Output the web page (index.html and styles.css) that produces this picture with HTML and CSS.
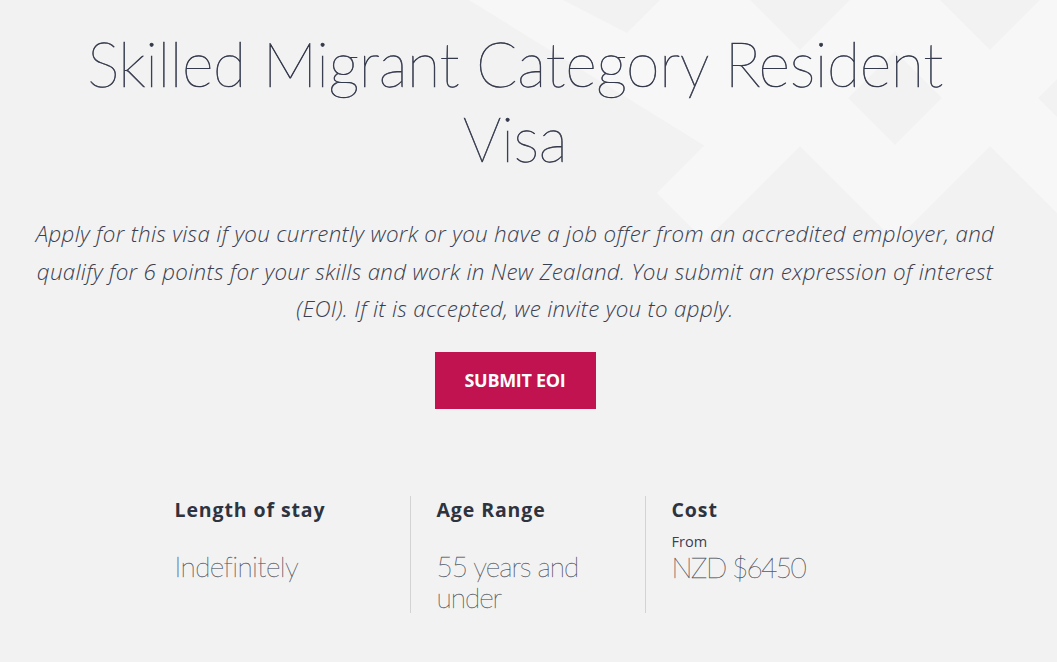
FILE: index.html
```html
<!DOCTYPE html>
<html lang="en">
<head>
<meta charset="utf-8">
<title>Skilled Migrant Category Resident Visa</title>
<link rel="stylesheet" href="styles.css">
</head>
<body>
<div class="page">
  <svg class="bg" viewBox="0 0 1057 662" width="1057" height="662" aria-hidden="true">
    <g fill="#f7f7f7">
      <polygon points="469,0 563,0 753,98 705,146"/>
      <polygon points="705,-45 753,3 705,51 657,3"/>
      <polygon points="895,-45 943,3 895,51 847,3"/>
      <polygon points="1085,-45 1133,3 1085,51 1037,3"/>
      <polygon points="657.5,2.5 705.5,50.5 657.5,98.5 609.5,50.5"/>
      <polygon points="752.5,2.5 800.5,50.5 752.5,98.5 704.5,50.5"/>
      <polygon points="847.5,2.5 895.5,50.5 847.5,98.5 799.5,50.5"/>
      <polygon points="942.5,2.5 990.5,50.5 942.5,98.5 894.5,50.5"/>
      <polygon points="1037.5,2.5 1085.5,50.5 1037.5,98.5 989.5,50.5"/>
      <polygon points="705,50 753,98 705,146 657,98"/>
      <polygon points="800,50 848,98 800,146 752,98"/>
      <polygon points="990,50 1038,98 990,146 942,98"/>
      <polygon points="752.5,97.5 800.5,145.5 752.5,193.5 704.5,145.5"/>
      <polygon points="847.5,97.5 895.5,145.5 847.5,193.5 799.5,145.5"/>
      <polygon points="942.5,97.5 990.5,145.5 942.5,193.5 894.5,145.5"/>
      <polygon points="1037.5,97.5 1085.5,145.5 1037.5,193.5 989.5,145.5"/>
      <polygon points="1132.5,97.5 1180.5,145.5 1132.5,193.5 1084.5,145.5"/>
      <polygon points="705,145 753,193 705,241 657,193"/>
      <polygon points="895,145 943,193 895,241 847,193"/>
      <polygon points="1085,145 1133,193 1085,241 1037,193"/>
    </g>
  </svg>

  <main class="content">
    <section class="hero">
      <h1 class="title">Skilled Migrant Category Resident Visa</h1>
      <p class="intro">Apply for this visa if you currently work or you have a job offer from an accredited employer, and qualify for 6 points for your skills and work in New Zealand. You submit an expression of interest (EOI). If it is accepted, we invite you to apply.</p>
      <a class="btn" href="#">SUBMIT EOI</a>
    </section>

    <section class="facts">
      <div class="fact">
        <h2 class="fact-label">Length of stay</h2>
        <p class="fact-value fact-value--spaced">Indefinitely</p>
      </div>
      <div class="fact">
        <h2 class="fact-label">Age Range</h2>
        <p class="fact-value fact-value--spaced fact-value--tight">55 years and under</p>
      </div>
      <div class="fact">
        <h2 class="fact-label">Cost</h2>
        <p class="fact-from">From</p>
        <p class="fact-value fact-value--price">NZD $6450</p>
      </div>
    </section>
  </main>
</div>
</body>
</html>
```

FILE: styles.css
```css
* { box-sizing: border-box; }

html, body {
  margin: 0;
  padding: 0;
  background: #f2f2f2;
}

body {
  font-family: "Open Sans", "Liberation Sans", sans-serif;
  color: #3a3f51;
  width: 1057px;
  height: 662px;
  overflow: hidden;
}

.page {
  position: relative;
  width: 1057px;
  height: 662px;
}

.bg {
  position: absolute;
  left: 0;
  top: 0;
  z-index: 0;
}

.content {
  position: relative;
  z-index: 1;
}

.hero {
  width: 1030px;
  display: flex;
  flex-direction: column;
  align-items: center;
  text-align: center;
  padding-top: 26px;
}

.title {
  margin: 0;
  width: 900px;
  font-family: "Lato", sans-serif;
  font-weight: 200;
  font-size: 61px;
  line-height: 75px;
  letter-spacing: -0.4px;
  color: #343a4c;
  -webkit-text-stroke: 0.6px #343a4c;
}

.intro {
  margin: 39px 0 0;
  width: 990px;
  font-family: "Open Sans", sans-serif;
  font-style: italic;
  font-weight: 300;
  font-size: 22.4px;
  line-height: 37.5px;
  letter-spacing: 0.3px;
  color: #3a3f51;
}

.btn {
  display: flex;
  align-items: center;
  justify-content: center;
  margin-top: 24px;
  width: 161px;
  height: 57px;
  background: #c0134f;
  color: #ffffff;
  font-family: "Open Sans", sans-serif;
  font-weight: 700;
  font-size: 18px;
  letter-spacing: -0.3px;
  text-decoration: none;
}

.facts {
  display: flex;
  justify-content: center;
  margin-top: 87px;
  padding-right: 3px;
}

.fact {
  width: 235px;
  min-height: 117px;
  padding-left: 26px;
  border-left: 1px solid #d3d3d3;
}

.fact:first-child {
  padding-left: 0;
  border-left: none;
}

.fact-label {
  margin: 0;
  font-family: "Open Sans", sans-serif;
  font-weight: 700;
  font-size: 19.5px;
  line-height: 28px;
  letter-spacing: 0.9px;
  color: #2e3340;
}

.fact-value {
  margin: 0;
  font-family: "Lato", sans-serif;
  font-weight: 200;
  font-size: 28px;
  line-height: 31px;
  letter-spacing: -0.6px;
  color: #555a66;
  -webkit-text-stroke: 0.3px #555a66;
}

.fact-value--spaced {
  margin-top: 27px;
  width: 160px;
}

.fact-value--tight {
  letter-spacing: -1px;
}

.fact-value--price {
  letter-spacing: -1.6px;
}

.fact-from {
  margin: 8px 0 0;
  font-family: "Open Sans", sans-serif;
  font-weight: 400;
  font-size: 14.5px;
  line-height: 20px;
  color: #3a3f51;
}
```
